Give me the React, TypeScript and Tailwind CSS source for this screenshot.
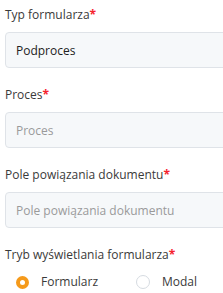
import React from 'react';

function Label({ children }: { children: React.ReactNode }) {
  return (
    <div className="h-5 leading-5 text-[12px] text-[#3a3a3a] mb-[7px]">
      {children}
      <span className="text-[#f5222d] font-bold">*</span>
    </div>
  );
}

function Field({ label, value, placeholder }: { label: string; value?: string; placeholder?: string }) {
  return (
    <div className="mb-[17px]">
      <Label>{label}</Label>
      <input
        readOnly
        value={value ?? ''}
        placeholder={placeholder}
        className="w-[240px] h-9 rounded border border-[#dfe3e8] bg-[#f6f8fa] px-[10px] text-[12px] text-[#222] placeholder:text-[#9a9a9a] outline-none"
      />
    </div>
  );
}

function Radio({ label, checked }: { label: string; checked?: boolean }) {
  return (
    <label className="flex items-center gap-[12px]">
      <span
        className={
          checked
            ? 'w-[13px] h-[13px] rounded-full border-[4px] border-[#f59a1b] bg-white'
            : 'w-[14px] h-[14px] rounded-full border border-[#d6dbe1] bg-white'
        }
      />
      <span className="text-[12px] text-[#3a3a3a]">{label}</span>
    </label>
  );
}

export default function App() {
  return (
    <div className="w-[223px] h-[293px] overflow-hidden bg-white pl-[5px] pt-[5px]" style={{ fontFamily: '"Open Sans", sans-serif' }}>
      <Field label="Typ formularza" value="Podproces" />
      <Field label="Proces" placeholder="Proces" />
      <Field label="Pole powiązania dokumentu" placeholder="Pole powiązania dokumentu" />
      <Label>Tryb wyświetlania formularza</Label>
      <div className="flex items-center gap-[38px] pl-[11px] pt-[1px]">
        <Radio label="Formularz" checked />
        <Radio label="Modal" />
      </div>
    </div>
  );
}
